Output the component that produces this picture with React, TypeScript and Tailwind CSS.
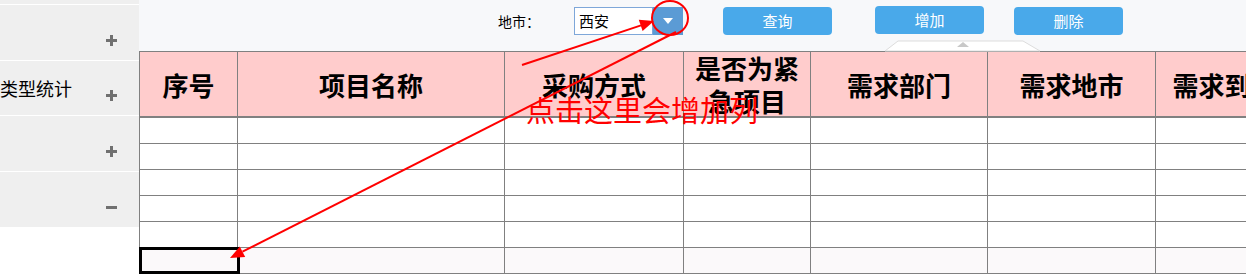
import React from 'react';

const columns = [
  { title: '序号', width: 'w-[98px]' },
  { title: '项目名称', width: 'w-[267px]' },
  { title: '采购方式', width: 'w-[179px]' },
  { title: '是否为紧急项目', width: 'w-[127px]' },
  { title: '需求部门', width: 'w-[177px]' },
  { title: '需求地市', width: 'w-[168px]' },
  { title: '需求到货时间', width: 'w-[190px]' },
];

const sideItems = [
  { label: '', sign: 'plus', height: 'h-[56px]' },
  { label: '类型统计', sign: 'plus', height: 'h-[55px]' },
  { label: '', sign: 'plus', height: 'h-[56px]' },
  { label: '', sign: 'minus', height: 'h-[55px]' },
];

function Sign({ type }: { type: string }) {
  return (
    <svg width="11" height="11" viewBox="0 0 11 11" className="text-[#707070]">
      <rect x="0" y="4" width="11" height="3" fill="currentColor" />
      {type === 'plus' && <rect x="4" y="0" width="3" height="11" fill="currentColor" />}
    </svg>
  );
}

function Sidebar() {
  return (
    <div className="w-[139px] shrink-0">
      <div className="h-[5px] bg-[#efefef] border-b border-white" />
      {sideItems.map((item, i) => (
        <div key={i} className={`${item.height} bg-[#efefef] border-b border-white flex items-center last:border-b-0`}>
          <span className="flex-1 text-[18px] text-black leading-none whitespace-nowrap">{item.label}</span>
          <span className="mr-[22px] mt-[15px] flex">
            <Sign type={item.sign} />
          </span>
        </div>
      ))}
    </div>
  );
}

function Toolbar() {
  return (
    <div className="h-[51px] bg-[#f7f8fa] flex items-start pt-[7px]">
      <span className="ml-[359px] w-[76px] text-[14px] leading-[28px] text-black">地市：</span>
      <div className="w-[79px] h-[28px] border border-[#7ea7d9] bg-white flex items-center pl-[4px] text-[15px] text-black">
        西安
      </div>
      <div className="w-[30px] h-[28px] bg-[#5b9bd5] flex items-center justify-center">
        <svg width="10" height="6" viewBox="0 0 10 6">
          <polygon points="0,0 10,0 5,6" fill="#ffffff" />
        </svg>
      </div>
      <button className="ml-[40px] w-[109px] h-[28px] rounded-[4px] bg-[#49a9ea] text-white text-[15px]">查询</button>
      <button className="ml-[43px] -mt-px w-[109px] h-[28px] rounded-[4px] bg-[#49a9ea] text-white text-[15px]">增加</button>
      <button className="ml-[30px] w-[109px] h-[28px] rounded-[4px] bg-[#49a9ea] text-white text-[15px]">删除</button>
    </div>
  );
}

function Grid() {
  const rows = [0, 1, 2, 3, 4, 5];
  return (
    <div className="border-t border-l border-[#808080] w-max">
      <div className="flex h-[66px] border-b-2 border-[#808080] bg-[#ffcccc]">
        {columns.map((c) => (
          <div
            key={c.title}
            className={`${c.width} shrink-0 border-r border-[#808080] flex items-center justify-center text-center text-[26px] font-bold leading-[33px] text-black px-[10px]`}
          >
            {c.title}
          </div>
        ))}
      </div>
      {rows.map((r) => (
        <div key={r} className={`flex h-[26px] border-b border-[#808080] ${r === 5 ? 'bg-[#fbf9fa]' : 'bg-white'}`}>
          {columns.map((c, ci) => (
            <div key={c.title} className={`${c.width} shrink-0 border-r border-[#808080] relative`}>
              {r === 5 && ci === 0 && (
                <div className="absolute -left-px -top-px w-[101px] h-[27px] border-[3px] border-black" />
              )}
            </div>
          ))}
        </div>
      ))}
    </div>
  );
}

function Annotations() {
  return (
    <>
      <svg className="absolute inset-0 pointer-events-none" width="1246" height="277" viewBox="0 0 1246 277">
        <polygon points="898,41 1023,41 1040,51 885,51" fill="#ffffff" stroke="#dddddd" strokeWidth="1" />
        <polygon points="957,47 969,47 963,42" fill="#c8c8c8" />
        <ellipse cx="670" cy="18" rx="18" ry="17" fill="none" stroke="#ff0000" strokeWidth="2" />
        <line x1="522" y1="65" x2="641" y2="25.4" stroke="#ff0000" strokeWidth="2" />
        <polygon points="654,21 642.6,31.1 638.8,19.7" fill="#ff0000" />
        <line x1="676" y1="32" x2="242.5" y2="251.7" stroke="#ff0000" strokeWidth="2" />
        <polygon points="230,258 245.2,257.1 239.8,246.4" fill="#ff0000" />
      </svg>
      <div className="absolute left-[526px] top-[95px] text-[29px] leading-none text-[#ff0000] whitespace-nowrap pointer-events-none">
        点击这里会增加列
      </div>
    </>
  );
}

export default function App() {
  return (
    <div
      className="relative w-[1246px] h-[277px] overflow-hidden bg-white flex items-start"
      style={{ fontFamily: '"Noto Sans CJK SC", "Noto Sans", sans-serif' }}
    >
      <Sidebar />
      <div className="flex-1 min-w-0 overflow-hidden">
        <Toolbar />
        <Grid />
      </div>
      <Annotations />
    </div>
  );
}
